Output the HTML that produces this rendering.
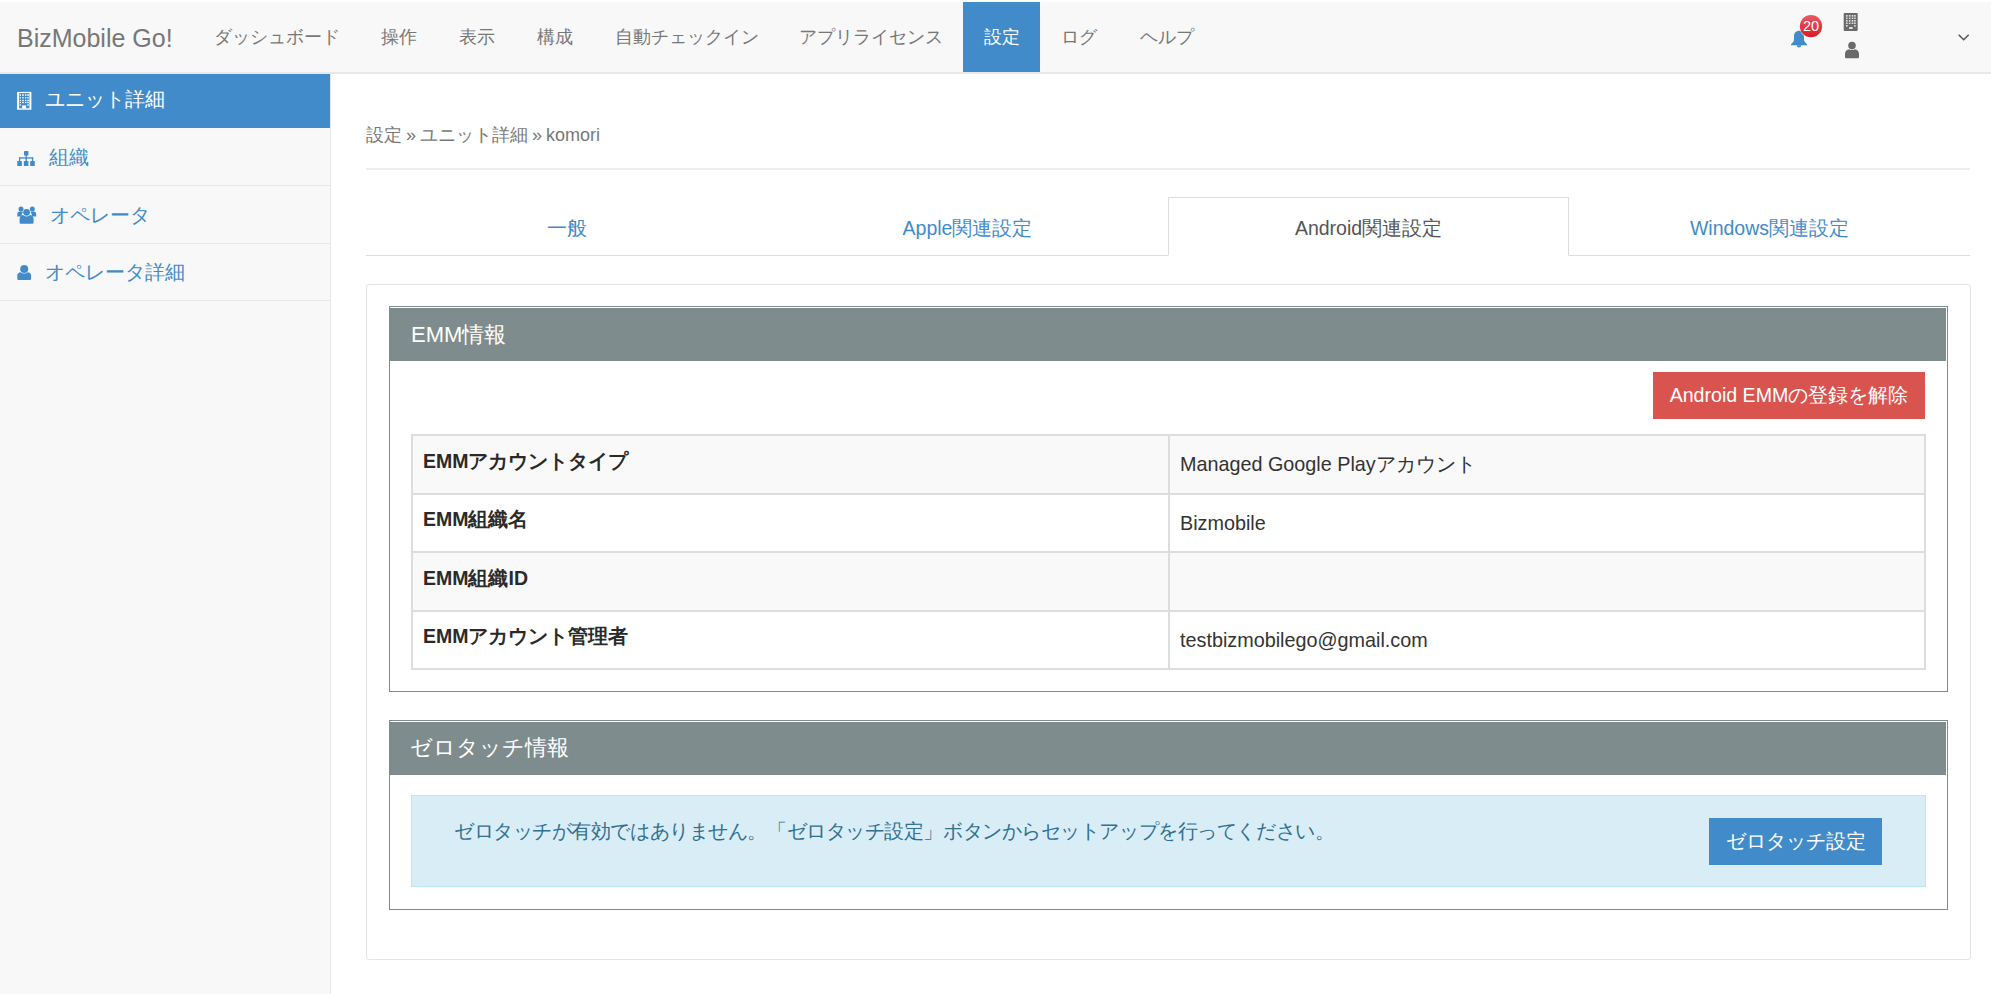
<!DOCTYPE html>
<html lang="ja">
<head>
<meta charset="utf-8">
<style>
*{box-sizing:border-box;margin:0;padding:0}
html,body{width:1993px;height:994px;overflow:hidden;background:#fff}
body{font-family:"Liberation Sans",sans-serif;color:#333;position:relative}
.abs{position:absolute;white-space:nowrap}
#nav{position:absolute;left:0;top:2px;width:1991px;height:72px;background:#f8f8f8;border-bottom:2px solid #e9e9e9}
.brand{position:absolute;left:17px;top:20.5px;font-size:25px;color:#777;line-height:30px}
.ni{position:absolute;top:0;height:70px;line-height:70px;font-size:18px;color:#777;text-align:center}
.ni.act{background:#428bca;color:#fff}
#side{position:absolute;left:0;top:74px;width:331px;height:920px;background:#f8f8f8;border-right:1px solid #e7e7e7}
.si{position:absolute;left:0;width:330px;border-bottom:1px solid #e7e7e7;color:#428bca;font-size:20px}
.si.act{background:#428bca;color:#fff;border-bottom:none}
.si span{position:absolute;top:0}
.crumb{position:absolute;left:366px;top:123px;font-size:18px;color:#777;line-height:24px;word-spacing:-1px}
.hr1{position:absolute;left:366px;top:168px;width:1604px;height:2px;background:#eee}
.tabline{position:absolute;left:366px;top:255px;width:1604px;height:1px;background:#ddd}
.tab{position:absolute;top:197px;height:58px;line-height:62px;text-align:center;font-size:19.5px;color:#428bca}
.tab.act{background:#fff;border:1px solid #ddd;border-bottom:1px solid #fff;color:#555;height:59px;line-height:60px}
.outer{position:absolute;left:366px;top:284px;width:1605px;height:676px;border:1px solid #e3e3e3;border-radius:3px}
.panel{position:absolute;left:389px;width:1559px;border:1px solid #7f8c8d;background:#fff}
.ph{position:absolute;left:0;top:1px;right:1px;background:#7f8c8d;color:#fff;font-size:22px}
.btn{position:absolute;color:#fff;font-size:19.6px;text-align:center}
table{position:absolute;left:411px;top:434px;width:1515px;border-collapse:collapse}
td{border:2px solid #ddd;height:58.5px;font-size:19.8px;vertical-align:top;padding:0 10px}
td.k{width:757px;font-weight:bold;color:#2a2a2a;font-size:19.5px;padding-left:10px}
tr:nth-child(odd) td{background:#f9f9f9}
.alert{position:absolute;left:411px;top:795px;width:1515px;height:92px;background:#d9edf7;border:1px solid #bce8f1}
</style>
</head>
<body>
<div id="nav">
  <div class="brand">BizMobile Go!</div>
  <div class="ni" style="left:194px;width:165px">ダッシュボード</div>
  <div class="ni" style="left:360px;width:78px">操作</div>
  <div class="ni" style="left:438px;width:78px">表示</div>
  <div class="ni" style="left:516px;width:78px">構成</div>
  <div class="ni" style="left:596px;width:182px">自動チェックイン</div>
  <div class="ni" style="left:779px;width:183px">アプリライセンス</div>
  <div class="ni act" style="left:963px;width:77px">設定</div>
  <div class="ni" style="left:1040px;width:78px">ログ</div>
  <div class="ni" style="left:1119px;width:96px">ヘルプ</div>
  <svg class="abs" style="left:1789px;top:10px" width="36" height="38" viewBox="0 0 36 38">
    <path d="M10 18.8c-2.9 0-5 2.3-5 5.2v3.6c0 2-1.3 3.2-3 4.6v1.1h16v-1.1c-1.7-1.4-3-2.6-3-4.6v-3.6c0-2.9-2.1-5.2-5-5.2z" fill="#428bca"/>
    <path d="M7.8 33.3a2.2 2.2 0 0 0 4.4 0z" fill="#428bca"/>
    <defs><linearGradient id="bg1" x1="0" y1="0" x2="0" y2="1"><stop offset="0" stop-color="#ea5a66"/><stop offset="1" stop-color="#d81b28"/></linearGradient></defs>
    <circle cx="22" cy="14.9" r="11.4" fill="#fff" opacity="0.6"/>
    <circle cx="22" cy="14.2" r="11.1" fill="url(#bg1)"/>
    <text x="22" y="19.4" text-anchor="middle" font-family="Liberation Sans" font-size="14.5" fill="#fff">20</text>
  </svg>
  <svg class="abs" style="left:1843px;top:10px" width="16" height="20" viewBox="0 0 16 20">
    <rect x="0.7" y="0.9" width="14" height="18" rx="0.8" fill="#6a6a6a"/>
    <g fill="#f8f8f8" opacity="0.85">
      <rect x="3" y="3" width="1.6" height="1.7"/><rect x="5.9" y="3" width="1.6" height="1.7"/><rect x="8.7" y="3" width="1.6" height="1.7"/><rect x="11.1" y="3" width="1.6" height="1.7"/>
      <rect x="3" y="5.6" width="1.6" height="1.4"/><rect x="5.9" y="5.6" width="1.6" height="1.4"/><rect x="8.7" y="5.6" width="1.6" height="1.4"/><rect x="11.1" y="5.6" width="1.6" height="1.4"/>
      <rect x="3" y="8" width="1.6" height="1.6"/><rect x="5.9" y="8" width="1.6" height="1.6"/><rect x="8.7" y="8" width="1.6" height="1.6"/><rect x="11.1" y="8" width="1.6" height="1.6"/>
      <rect x="3" y="10.5" width="1.6" height="1.5"/><rect x="5.9" y="10.5" width="1.6" height="1.5"/><rect x="8.7" y="10.5" width="1.6" height="1.5"/><rect x="11.1" y="10.5" width="1.6" height="1.5"/>
      <rect x="3" y="13" width="1.6" height="1.6"/><rect x="11.1" y="13" width="1.6" height="1.6"/>
      <rect x="6" y="15" width="3.8" height="2" rx="0.8"/>
    </g>
  </svg>
  <svg class="abs" style="left:1843px;top:38px" width="18" height="19" viewBox="0 0 18 19">
    <circle cx="9" cy="5.6" r="3.8" fill="#6a6a6a"/>
    <path d="M2 17.2v-3.4c0-2.4 1.6-4.4 4.2-4.6 0.8 0.6 1.7 0.9 2.8 0.9s2-0.3 2.8-0.9c2.6 0.2 4.2 2.2 4.2 4.6v3.4c0 0.6-0.5 1-1 1h-12c-0.5 0-1-0.4-1-1z" fill="#6a6a6a"/>
  </svg>
  <svg class="abs" style="left:1955px;top:29px" width="18" height="12" viewBox="0 0 18 12">
    <path d="M3.7 3.7l5 5 5-5" fill="none" stroke="#555" stroke-width="1.5"/>
  </svg>
</div>

<div id="side">
  <div class="si act" style="top:0;height:54px"></div>
  <div class="si" style="top:54px;height:58px"></div>
  <div class="si" style="top:112px;height:58px"></div>
  <div class="si" style="top:170px;height:57px"></div>
</div>
<div class="abs" style="left:45px;top:87px;font-size:20px;color:#fff;line-height:24px">ユニット詳細</div>
<div class="abs" style="left:49px;top:145px;font-size:20px;color:#428bca;line-height:24px">組織</div>
<div class="abs" style="left:50px;top:203px;font-size:20px;color:#428bca;line-height:24px">オペレータ</div>
<div class="abs" style="left:45px;top:260px;font-size:20px;color:#428bca;line-height:24px">オペレータ詳細</div>

<svg class="abs" style="left:16px;top:91px" width="17" height="20" viewBox="0 0 17 20">
  <rect x="1.1" y="0.9" width="14.3" height="17.8" fill="#fff"/>
  <rect x="3.1" y="2.1" width="10.3" height="15.2" fill="#428bca"/>
  <g fill="#fff" opacity="0.9">
    <rect x="3.6" y="3.2" width="1.4" height="1.7"/><rect x="6.1" y="3.2" width="1.7" height="1.7"/><rect x="9" y="3.2" width="1.4" height="1.7"/><rect x="11.2" y="3.2" width="1.7" height="1.7"/>
    <rect x="3.6" y="6.1" width="1.4" height="1.3"/><rect x="6.1" y="6.1" width="1.7" height="1.3"/><rect x="9" y="6.1" width="1.4" height="1.3"/><rect x="11.2" y="6.1" width="1.7" height="1.3"/>
    <rect x="3.6" y="8.8" width="1.4" height="1.4"/><rect x="6.1" y="8.8" width="1.7" height="1.4"/><rect x="9" y="8.8" width="1.4" height="1.4"/><rect x="11.2" y="8.8" width="1.7" height="1.4"/>
    <rect x="3.6" y="10.9" width="1.4" height="1.3"/><rect x="6.1" y="10.9" width="1.7" height="1.3"/><rect x="9" y="10.9" width="1.4" height="1.3"/><rect x="11.2" y="10.9" width="1.7" height="1.3"/>
    <rect x="3.6" y="13.3" width="1.4" height="1.4"/><rect x="11.2" y="13.3" width="1.7" height="1.4"/>
  </g>
  <rect x="6.1" y="14.4" width="4" height="3" fill="#fff"/>
</svg>
<svg class="abs" style="left:17px;top:150px" width="19" height="17" viewBox="0 0 19 17">
  <g fill="#428bca">
    <rect x="7" y="1" width="4.4" height="4.4" rx="0.6"/>
    <rect x="0.3" y="11" width="4.6" height="5" rx="0.6"/>
    <rect x="6.8" y="11" width="4.6" height="5" rx="0.6"/>
    <rect x="13.2" y="11" width="4.6" height="5" rx="0.6"/>
    <rect x="8.5" y="5" width="1.4" height="6.2"/>
    <rect x="2" y="7.3" width="14.2" height="1.3"/>
    <rect x="2" y="7.3" width="1.3" height="4"/>
    <rect x="14.9" y="7.3" width="1.3" height="4"/>
  </g>
</svg>
<svg class="abs" style="left:17px;top:205px" width="20" height="20" viewBox="0 0 20 20">
  <g fill="#428bca">
    <circle cx="4" cy="3.9" r="2.5"/>
    <circle cx="15.3" cy="3.9" r="2.5"/>
    <path d="M0.3 11.5v-2.6c0-1.4 1-2.4 2.3-2.4h2.2c0.5 0 1 0.2 1.4 0.5-0.9 0.9-1.5 2.2-1.5 3.6v0.9z"/>
    <path d="M19.2 11.5v-2.6c0-1.4-1-2.4-2.3-2.4h-2.2c-0.5 0-1 0.2-1.4 0.5 0.9 0.9 1.5 2.2 1.5 3.6v0.9z"/>
    <circle cx="9.6" cy="7.3" r="3.4"/>
    <path d="M2.6 17.4v-3.3c0-2.2 1.4-3.8 3.4-4 1 0.9 2.2 1.3 3.6 1.3s2.6-0.4 3.6-1.3c2 0.2 3.4 1.8 3.4 4v3.3c0 0.8-0.6 1.4-1.4 1.4h-11.2c-0.8 0-1.4-0.6-1.4-1.4z"/>
  </g>
</svg>
<svg class="abs" style="left:17px;top:264px" width="16" height="17" viewBox="0 0 16 17">
  <g fill="#428bca">
    <circle cx="7.2" cy="5" r="4"/>
    <path d="M0.3 14.8v-3.2c0-1.9 1.5-3.3 3.3-3.4 1 0.8 2.2 1.2 3.6 1.2s2.6-0.4 3.6-1.2c1.8 0.1 3.3 1.5 3.3 3.4v3.2c0 0.7-0.5 1.2-1.2 1.2h-11.4c-0.7 0-1.2-0.5-1.2-1.2z"/>
  </g>
</svg>

<div class="crumb">設定 » ユニット詳細 » komori</div>
<div class="hr1"></div>

<div class="tabline"></div>
<div class="tab" style="left:366px;width:401px">一般</div>
<div class="tab" style="left:767px;width:401px">Apple関連設定</div>
<div class="tab act" style="left:1168px;width:401px">Android関連設定</div>
<div class="tab" style="left:1569px;width:401px">Windows関連設定</div>

<div class="outer"></div>

<div class="panel" style="top:306px;height:386px">
  <div class="ph" style="height:53px;line-height:53px;padding-left:21px">EMM情報</div>
</div>
<div class="btn" style="left:1653px;top:372px;width:272px;height:47px;line-height:47px;background:#d9534f">Android EMMの登録を解除</div>

<table>
  <tr><td class="k" style="padding-top:11.8px">EMMアカウントタイプ</td><td style="padding-top:15px">Managed Google Playアカウント</td></tr>
  <tr><td class="k" style="padding-top:11.8px">EMM組織名</td><td style="padding-top:17px">Bizmobile</td></tr>
  <tr><td class="k" style="padding-top:11.8px">EMM組織ID</td><td></td></tr>
  <tr><td class="k" style="padding-top:11.8px">EMMアカウント管理者</td><td style="padding-top:17px">testbizmobilego@gmail.com</td></tr>
</table>

<div class="panel" style="top:720px;height:190px">
  <div class="ph" style="height:53px;line-height:51px;padding-left:20px">ゼロタッチ情報</div>
</div>
<div class="alert"></div>
<div class="abs" style="left:454px;top:818.5px;font-size:20px;color:#31708f;line-height:24px;letter-spacing:-0.44px">ゼロタッチが有効ではありません。「ゼロタッチ設定」ボタンからセットアップを行ってください。</div>
<div class="btn" style="left:1709px;top:818px;width:173px;height:47px;line-height:47px;background:#428bca;font-size:19.9px">ゼロタッチ設定</div>

</body>
</html>
